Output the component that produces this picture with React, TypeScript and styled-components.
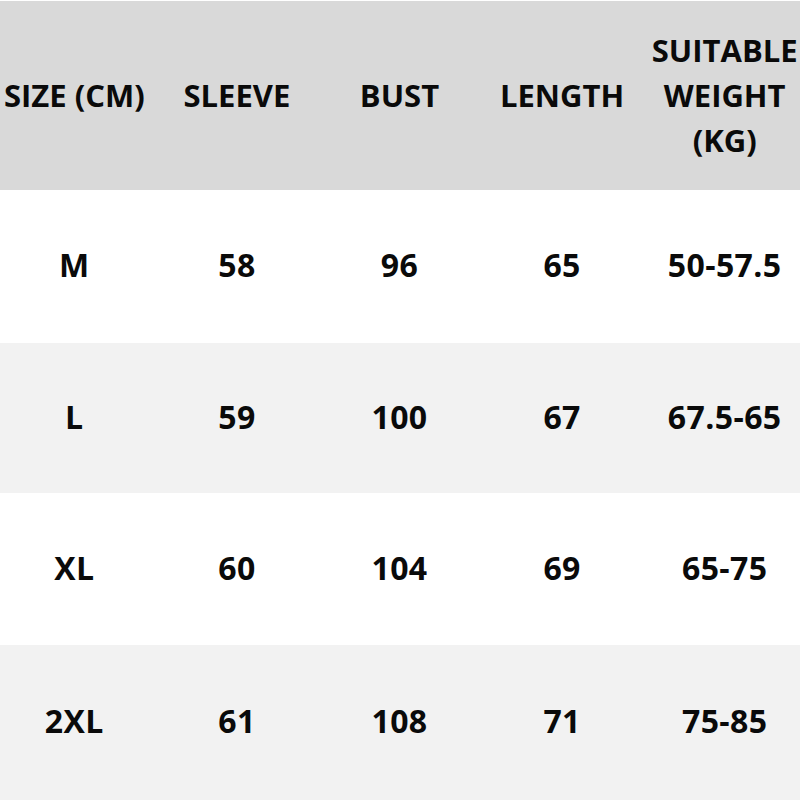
import styled, { createGlobalStyle } from 'styled-components'

const GlobalStyle = createGlobalStyle`
  html, body {
    margin: 0;
    padding: 0;
    background: #ffffff;
    overflow: hidden;
  }
  body {
    font-family: 'Open Sans', 'Noto Sans', 'DejaVu Sans', sans-serif;
  }
`

const Page = styled.div`
  width: 800px;
  height: 800px;
  overflow: hidden;
  padding-top: 1px;
  box-sizing: border-box;
`

const Table = styled.div`
  width: 813px;
  margin-left: -7px;
  display: flex;
  flex-direction: column;
`

const Row = styled.div<{ $bg: string; $height: number }>`
  display: grid;
  grid-template-columns: repeat(5, 1fr);
  height: ${(p) => p.$height}px;
  background: ${(p) => p.$bg};
  align-items: center;
`

const Cell = styled.div<{ $head?: boolean }>`
  text-align: center;
  font-size: ${(p) => (p.$head ? '31px' : '32px')};
  font-weight: 700;
  color: #0a0a0a;
  line-height: ${(p) => (p.$head ? '45px' : '1')};
  padding-bottom: ${(p) => (p.$head ? '0' : '3px')};
  letter-spacing: ${(p) => (p.$head ? '0' : '0.4px')};
  white-space: nowrap;
`

const rows = [
  ['M', '58', '96', '65', '50-57.5'],
  ['L', '59', '100', '67', '67.5-65'],
  ['XL', '60', '104', '69', '65-75'],
  ['2XL', '61', '108', '71', '75-85'],
]

const heights = [153, 150, 152, 155]

export default function App() {
  return (
    <Page>
      <GlobalStyle />
      <Table>
        <Row $bg="#d9d9d9" $height={189}>
          <Cell $head>SIZE (CM)</Cell>
          <Cell $head>SLEEVE</Cell>
          <Cell $head>BUST</Cell>
          <Cell $head>LENGTH</Cell>
          <Cell $head>
            SUITABLE
            <br />
            WEIGHT
            <br />
            (KG)
          </Cell>
        </Row>
        {rows.map((r, i) => (
          <Row key={r[0]} $bg={i % 2 === 0 ? '#ffffff' : '#f2f2f2'} $height={heights[i]}>
            {r.map((v, j) => (
              <Cell key={j}>{v}</Cell>
            ))}
          </Row>
        ))}
      </Table>
    </Page>
  )
}
